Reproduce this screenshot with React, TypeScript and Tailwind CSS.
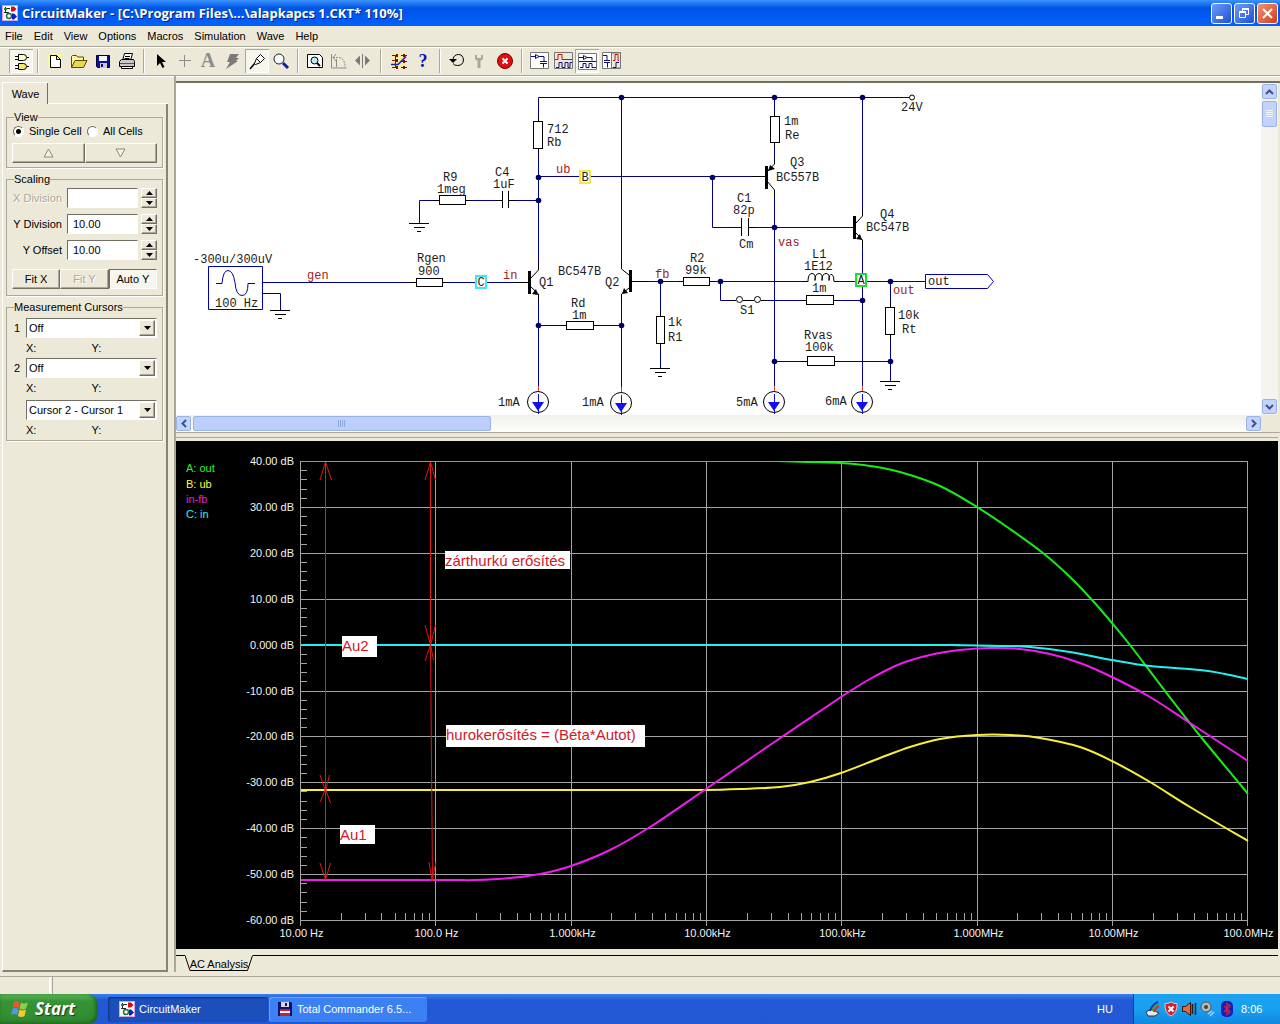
import React from 'react';

const SANS = 'font-["Liberation_Sans",Arial,sans-serif]';
const RAISED = 'border border-t-white border-l-white border-r-[#716f64] border-b-[#716f64] shadow-[inset_-1px_-1px_0_#aca899]';
const SUNKEN = 'border border-t-[#716f64] border-l-[#716f64] border-r-white border-b-white';

/* ---------- shared icons ---------- */

const AppIcon = () => (
  <svg width="16" height="16" viewBox="0 0 16 16" className="shrink-0">
    <rect x="0.5" y="0.5" width="15" height="15" fill="#fff" stroke="#e0a0e0" />
    <path d="M2 3.500h6M3.500 2v6M2 7.500h5M5.500 8v6" stroke="#222" fill="none" />
    <path d="M2 3h3v2H2z" fill="#1a8a2a" />
    <path d="M9 1.500h3l2.500 2.500L12 6.500H9z" fill="#d01010" />
    <circle cx="7" cy="11" r="2.500" fill="#fff" stroke="#137a3a" strokeWidth="1.500" />
    <path d="M10 8.500h2l3 3-3 3h-2z" fill="#1020c0" />
  </svg>
);

const icons: Record<string, React.ReactNode> = {
  gates: (
    <g stroke="#000" fill="#ffffc8">
      <path d="M9.500 5.500h5q3 0 3 3t-3 3h-5z" />
      <path d="M9.500 14.500h5q3 0 3 3t-3 3h-5z" fill="#f4e76a" />
      <path d="M6 7.500h3M6 10.500h3M18 8.500h2M6 16.500h3M6 19.500h3M18 17.500h2" />
    </g>
  ),
  fresh: (
    <g>
      <path d="M5 5h14v14H5z" fill="#ffff80" opacity="0.700" />
      <path d="M7.500 6.500h6l4 4v8h-10z" fill="#fff" stroke="#000" />
      <path d="M13.500 6.500v4h4" fill="none" stroke="#000" />
    </g>
  ),
  open: (
    <g stroke="#5a4a00" strokeLinejoin="round">
      <path d="M4.500 18.500v-11l1-1h4l1 1.500h6v3" fill="#fff8a0" />
      <path d="M4.500 18.500l3.500-7h12l-3.500 7z" fill="#e8d850" />
    </g>
  ),
  save: (
    <g>
      <path d="M5.500 6.500h13v12h-12l-1-1z" fill="#10108c" stroke="#000040" />
      <path d="M8 7h8v5H8z" fill="#f4f4ff" />
      <path d="M9 14h7v5H9z" fill="#c8c8d8" />
      <path d="M10 15h2v3h-2z" fill="#10108c" />
    </g>
  ),
  print: (
    <g stroke="#000" fill="#fff">
      <path d="M7.500 11.500l2-7h8l-2 7" />
      <path d="M10 7.500h5M9.500 9.500h5" />
      <path d="M4.500 12.500l2-2h12l1 2v5h-15z" fill="#c8c8c8" />
      <path d="M6.500 17.500h11v2h-11z" />
      <path d="M5 14.500h14" stroke="#555" />
    </g>
  ),
  pointer: <path d="M8 5v12l3-3 2.500 5 2-1-2.500-5h4z" fill="#000" />,
  plus: <path d="M6 11.500h12M11.500 6v12" stroke="#8c8c8c" />,
  letter: (
    <text x="11" y="18" textAnchor="middle" fontSize="20" fontWeight="bold" fill="#8c8c8c" fontFamily="Liberation Serif, serif">A</text>
  ),
  bolt: <path d="M9 5h9l-3 4h3l-3 3h2L5 20l4-7H6z" fill="#7a7a7a" />,
  probe: (
    <g stroke="#000" fill="#fff" strokeLinejoin="round">
      <path d="M5 20l5-6" strokeWidth="1.500" />
      <path d="M9.500 14.500l2-5 4-4 4 4-4 4-5 2z" />
      <path d="M11.500 9.500l4 4" />
    </g>
  ),
  lens: (
    <g>
      <path d="M14 14l5 5" stroke="#1020a0" strokeWidth="3" />
      <circle cx="10" cy="10" r="5" fill="#f6fbff" stroke="#222" />
    </g>
  ),
  fit: (
    <g stroke="#000" fill="#fff">
      <path d="M4.500 5.500h12l3 3v10h-15z" />
      <circle cx="11.500" cy="11.500" r="3.500" fill="#bfe8ee" />
      <path d="M14 14l3 3" strokeWidth="2" />
    </g>
  ),
  rotate: (
    <g stroke="#8c8c8c" fill="none">
      <path d="M4.500 5v14h15" />
      <path d="M6 8.500h5q7 0 7 10" strokeDasharray="2 1" />
      <path d="M9 5l-3 3.500 3 3.500M9.500 18v-8" />
    </g>
  ),
  mirror: (
    <g fill="#7a7a7a">
      <path d="M4 11.500l5-5v10zM19 11.500l-5-5v10z" />
      <path d="M11 5h1v14h-1z" />
    </g>
  ),
  wiring: (
    <g fill="none" stroke="#801010">
      <path d="M5 5h14v14H5z" fill="#fff27a" stroke="none" opacity="0.600" />
      <path d="M5 6.500h6M14 6.500h6M8.500 6v12M5 11.500h6M14 12.500h6M5 18.500h6M14 18.500h6" />
      <path d="M4 15.500h7l8-8" stroke="#1020c0" strokeWidth="1.500" />
      <path d="M9 5h2v3H9zM16 5h2v3h-2zM9 10h2v3H9zM16 11h2v3h-2zM9 17h2v3H9zM16 17h2v3h-2z" fill="#801010" stroke="none" />
    </g>
  ),
  help: (
    <text x="12" y="18" textAnchor="middle" fontSize="18" fontWeight="bold" fill="#1010b0" fontFamily="Liberation Serif, serif">?</text>
  ),
  reset: (
    <g fill="none" stroke="#000">
      <path d="M8 10q1-4.500 5.500-4.500t5 5.500q-.5 5.500-6 5.500-3.500 0-4.500-2" />
      <path d="M4 10h8l-4 4z" fill="#000" stroke="none" />
    </g>
  ),
  wrench: (
    <g fill="#a8a8a0">
      <path d="M6 6v4l2.500 2v7h3v-7l2.500-2V6h-2v3H8V6z" />
    </g>
  ),
  stop: (
    <g>
      <circle cx="12" cy="12" r="7.500" fill="#e01010" stroke="#700" />
      <path d="M9.500 9.500l5 5M14.500 9.500l-5 5" stroke="#fff" strokeWidth="2" />
    </g>
  ),
  viewA: (
    <g fill="none" stroke="#10106c">
      <path d="M3.500 3.500h18v16h-18z" fill="#fff" stroke="#777" />
      <path d="M4 7.500h4M12 7.500h5v5M13 12.500h7M13 14.500h7M16.500 14.500v4" />
      <path d="M8.500 5.500v4l3.500-2z" />
    </g>
  ),
  viewB: (
    <g fill="none">
      <path d="M3.500 3.500h18v16h-18z" fill="#ece9d8" stroke="#777" />
      <path d="M4 10.500h3v-5h4v5h10" stroke="#c01010" />
      <path d="M5 18.500h3v-5h3v5h3v-5h3v5h2v-5h2" stroke="#10108c" />
    </g>
  ),
  viewC: (
    <g fill="none" stroke="#10106c">
      <path d="M3.500 4.500h18v16h-18z" fill="#fff" stroke="#777" />
      <path d="M4 8.500h4M12 8.500h5v3M4 12.500h17" />
      <path d="M8.500 6.500v4l3.500-2z" />
      <path d="M5 18.500h3v-4h3v4h3v-4h3v4h4" />
    </g>
  ),
  viewD: (
    <g fill="none" stroke="#10106c">
      <path d="M3.500 3.500h18v16h-18z" fill="#fff" stroke="#777" />
      <path d="M12.500 4h9v15h-9z" fill="#ece9d8" stroke="#777" />
      <path d="M4 6.500h4v5M5 11.500h6M5 13.500h6M8.500 13.500v5" />
      <path d="M14 11.500h2v-6h3v6h1" stroke="#c01010" />
      <path d="M14 18.500h3v-5h3" />
    </g>
  ),
};

/* ---------- title, menu, toolbar ---------- */

const TitleBar = () => (
  <header className="flex h-[26px] shrink-0 items-center bg-linear-to-b from-[#3a93ff] via-[#0054e3] via-30% to-[#0062ff] pr-[2px] pl-[2px]">
    <AppIcon />
    <h1 className='ml-1 flex-1 truncate font-["Open_Sans",sans-serif] text-[13px] leading-5 font-bold text-white [text-shadow:1px_1px_0_#0a1f7a]'>
      CircuitMaker - [C:\Program Files\...\alapkapcs 1.CKT* 110%]
    </h1>
    <div className="flex gap-[2px]">
      <button aria-label="Minimize" className="h-[21px] w-[21px] rounded-[3px] border border-white bg-linear-to-br from-[#6f9bf5] to-[#1c4fd8]">
        <svg width="19" height="19" viewBox="0 0 19 19"><path d="M4 12h7v3H4z" fill="#fff" /></svg>
      </button>
      <button aria-label="Restore" className="h-[21px] w-[21px] rounded-[3px] border border-white bg-linear-to-br from-[#6f9bf5] to-[#1c4fd8]">
        <svg width="19" height="19" viewBox="0 0 19 19" fill="none" stroke="#fff">
          <path d="M4.500 8.500h6v5h-6zM7.500 8V5.500h6v5H11" />
          <path d="M4 8h7M7 5h7" strokeWidth="2" />
        </svg>
      </button>
      <button aria-label="Close" className="h-[21px] w-[21px] rounded-[3px] border border-white bg-linear-to-br from-[#f09070] to-[#d03a10]">
        <svg width="19" height="19" viewBox="0 0 19 19"><path d="M5 5l9 9M14 5l-9 9" stroke="#fff" strokeWidth="2" /></svg>
      </button>
    </div>
  </header>
);

const MenuBar = () => (
  <nav className={`flex h-5 shrink-0 items-center pl-[5px] text-[11px] leading-4 ${SANS}`}>
    {['File', 'Edit', 'View', 'Options', 'Macros', 'Simulation', 'Wave', 'Help'].map((m) => (
      <button key={m} className="mr-[11px]">{m}</button>
    ))}
  </nav>
);

const ToolGroup = ({ names, pressed }: { names: string[]; pressed?: string }) => (
  <div className="flex">
    {names.map((n) => (
      <button
        key={n}
        aria-label={n}
        className={n === pressed ? 'h-6 w-6 bg-[#f6f5ee] shadow-[inset_1px_1px_0_#aca899,inset_-1px_-1px_0_#fff]' : 'h-6 w-6'}
      >
        <svg width="24" height="24" viewBox="0 0 24 24">{icons[n]}</svg>
      </button>
    ))}
  </div>
);

const Divider = ({ wide }: { wide?: boolean }) => (
  <div className={`h-6 w-[2px] border-l border-[#aca899] bg-white ${wide ? 'mx-[5px]' : 'mx-1'}`} />
);

const Toolbar = () => (
  <div className="flex h-[30px] shrink-0 items-center border-t border-b border-[#aca899] pl-[9px] shadow-[inset_0_1px_0_#fff,0_1px_0_#fff]">
    <ToolGroup names={['gates']} pressed="gates" />
    <Divider />
    <ToolGroup names={['fresh', 'open', 'save', 'print']} />
    <Divider />
    <ToolGroup names={['pointer', 'plus', 'letter', 'bolt', 'probe', 'lens']} pressed="probe" />
    <Divider />
    <ToolGroup names={['fit', 'rotate', 'mirror']} />
    <Divider wide />
    <ToolGroup names={['wiring', 'help']} />
    <Divider />
    <ToolGroup names={['reset', 'wrench', 'stop']} />
    <Divider />
    <ToolGroup names={['viewA', 'viewB', 'viewC', 'viewD']} pressed="viewC" />
  </div>
);

/* ---------- left panel ---------- */

const Group = ({ title, className, children }: { title: string; className: string; children: React.ReactNode }) => (
  <fieldset className={`border border-[#aca899] px-[5px] shadow-[1px_1px_0_#fff] ${className}`}>
    <legend className="ml-[2px] leading-3">{title}</legend>
    {children}
  </fieldset>
);

const ScaleRow = ({ id, label, value, disabled }: { id: string; label: string; value: string; disabled?: boolean }) => (
  <div className="flex h-5 items-center">
    <label htmlFor={id} className={`w-[50px] text-right whitespace-nowrap ${disabled ? 'text-[#aca899] [text-shadow:1px_1px_0_#fff]' : ''}`}>{label}</label>
    <input id={id} defaultValue={value} disabled={disabled} className={`ml-[5px] h-5 w-[71px] bg-white pl-[5px] ${SUNKEN}`} />
    <div className="ml-auto flex h-5 w-4 flex-col">
      <button aria-label={`${label} up`} className={`flex h-[10px] items-center justify-center bg-[#ece9d8] ${RAISED}`}>
        <svg width="7" height="4" viewBox="0 0 7 4"><path d="M0 4h7L3.500 0z" /></svg>
      </button>
      <button aria-label={`${label} down`} className={`flex h-[10px] items-center justify-center bg-[#ece9d8] ${RAISED}`}>
        <svg width="7" height="4" viewBox="0 0 7 4"><path d="M0 0h7L3.500 4z" /></svg>
      </button>
    </div>
  </div>
);

const CursorSelect = ({ mark, name, value }: { mark: string; name: string; value: string }) => (
  <>
    <div className="flex h-5 items-center">
      <label htmlFor={name} className="w-[14px] pl-[2px]">{mark}</label>
      <div className="relative h-5 flex-1">
        <select id={name} aria-label={name} defaultValue={value} className={`h-5 w-full appearance-none bg-white pl-[2px] ${SUNKEN}`}>
          <option>{value}</option>
        </select>
        <span className={`pointer-events-none absolute top-[2px] right-[2px] flex h-4 w-4 items-center justify-center bg-[#ece9d8] ${RAISED}`}>
          <svg width="7" height="4" viewBox="0 0 7 4"><path d="M0 0h7L3.500 4z" /></svg>
        </span>
      </div>
    </div>
    <div className="grid h-5 grid-cols-2 items-center pl-[14px]">
      <span>X:</span>
      <span>Y:</span>
    </div>
  </>
);

const RADIO = 'h-[11px] w-[11px] appearance-none rounded-full border border-[#716f64] border-r-white border-b-white bg-white checked:bg-[radial-gradient(circle,#000_2px,#fff_3px)]';

const SidePanel = () => (
  <aside className={`flex w-[168px] shrink-0 flex-col pt-[6px] pl-[2px] text-[11px] leading-4 ${SANS}`}>
    <div className="z-10 flex h-[22px]">
      <button className="h-[22px] w-[46px] border-t border-l border-t-white border-l-white bg-[#ece9d8] shadow-[inset_-1px_0_0_#716f64]">Wave</button>
      <div className="flex-1 border-b border-white" />
    </div>
    <div className="flex flex-1 flex-col gap-[5px] border-r-2 border-b-2 border-l border-r-[#868378] border-b-[#868378] border-l-white px-[3px] pt-[7px]">
      <Group title="View" className="pb-1">
        <div className="flex h-4 items-center whitespace-nowrap">
          <input type="radio" id="single" name="view" defaultChecked className={`ml-[1px] ${RADIO}`} />
          <label htmlFor="single" className="ml-[5px] w-[58px]">Single Cell</label>
          <input type="radio" id="all" name="view" className={RADIO} />
          <label htmlFor="all" className="ml-[5px]">All Cells</label>
        </div>
        <div className="mt-1 grid grid-cols-2">
          <button aria-label="Previous cell" className={`flex h-5 items-center justify-center ${RAISED}`}>
            <svg width="11" height="10" viewBox="0 0 11 10"><path d="M1 9h9L5.500 1z" fill="#f4f2e6" stroke="#8c897c" /></svg>
          </button>
          <button aria-label="Next cell" className={`flex h-5 items-center justify-center ${RAISED}`}>
            <svg width="11" height="10" viewBox="0 0 11 10"><path d="M1 1h9L5.500 9z" fill="#f4f2e6" stroke="#8c897c" /></svg>
          </button>
        </div>
      </Group>

      <Group title="Scaling" className="pb-[6px]">
        <div className="flex flex-col gap-[6px] pt-[3px]">
          <ScaleRow id="xdiv" label="X Division" value="" disabled />
          <ScaleRow id="ydiv" label="Y Division" value="10.00" />
          <ScaleRow id="yoff" label="Y Offset" value="10.00" />
        </div>
        <div className="mt-[9px] grid grid-cols-3">
          <button className={`h-5 ${RAISED}`}>Fit X</button>
          <button disabled className={`h-5 text-[#aca899] [text-shadow:1px_1px_0_#fff] ${RAISED}`}>Fit Y</button>
          <button className={`h-5 bg-[#f6f5ee] ${SUNKEN}`}>Auto Y</button>
        </div>
      </Group>

      <Group title="Measurement Cursors" className="pt-[5px]">
        <CursorSelect mark="1" name="Cursor 1" value="Off" />
        <CursorSelect mark="2" name="Cursor 2" value="Off" />
        <div className="h-[2px]" />
        <CursorSelect mark="" name="Cursor difference" value="Cursor 2 - Cursor 1" />
      </Group>
    </div>
  </aside>
);

/* ---------- schematic ---------- */

const wires = [
  'M538.500 121V97.500H909', 'M538.500 149V263', 'M419.500 223V200.500H439', 'M466 200.500H502', 'M509 200.500H538',
  'M263 282.500H416', 'M443 282.500H514', 'M263 293.500H280.500V310', 'M538.500 301V391', 'M538.500 325.500H566', 'M594 325.500H621',
  'M621.500 97V266', 'M621.500 301V391', 'M538 176.500H752', 'M712.500 177V227.500H741', 'M749 227.500H853', 'M774.500 97V116',
  'M774.500 143V158', 'M774.500 196V391', 'M862.500 97V210', 'M862.500 246V391', 'M646 281.500H683', 'M710 281.500H808',
  'M834 281.500H925', 'M720.500 281V300.500H736', 'M761 300.500H807', 'M834 300.500H862', 'M660.500 281V316', 'M660.500 344V368',
  'M890.500 281V307', 'M890.500 335V381', 'M774 361.500H807', 'M835 361.500H890',
];

// short black component leads that sit on top of the wires
const leads = [
  'M433 200.500h6M466 200.500h5M496 200.500h6M509 200.500h6', 'M410 282.500h6M443 282.500h5', 'M538.500 116v5M538.500 149v5',
  'M514 282.500h15', 'M632 281.500h15', 'M752 176.500h14', 'M561 325.500h5M594 325.500h5', 'M774.500 111v5M774.500 143v5',
  'M660.500 311v5M660.500 344v5', 'M678 281.500h5M710 281.500h5', 'M735 227.500h6M749 227.500h6', 'M801 300.500h6M834 300.500h6',
  'M801 361.500h6M835 361.500h6', 'M890.500 302v5M890.500 335v5', 'M730 300.500h6M743 300.500h11M761 300.500h6', 'M803 281.500h5M834 281.500h5',
  // capacitor plates
  'M502.500 191v17M508.500 191v17M741.500 218v18M748.500 218v18',
  // transistors
  'M531 278l7.500-8v-8M531 287l7.500 7v8', 'M629 275l-7.500-6v-7M629 288l-7.500 6v8',
  'M767 172l7.500-8v-7M767 181l7.500 9v7', 'M856 223l6.500-7v-7M856 233l6.500 7v7',
  // coil
  'M808 281.500q0-8 4-8q4 0 3 7q0-7 4-7t3 7q0-7 4-7q4 0 3 7q0-7 3-6q2 1 2 7',
];

const resistors = [
  [533, 121, 9, 27], [439, 195, 26, 9], [416, 278, 26, 8], [770, 116, 9, 26], [683, 277, 26, 8], [656, 316, 8, 27],
  [566, 321, 27, 8], [806, 295, 27, 9], [885, 307, 9, 27], [807, 356, 27, 9],
];

const nodes = [
  [538, 177], [538, 200], [538, 325], [621, 97], [621, 325], [712, 177], [774, 97], [774, 227], [774, 361],
  [862, 97], [660, 281], [720, 281], [890, 281], [862, 300], [890, 361],
];

const parts: [number, number, string][] = [
  [547, 133, '712'], [547, 146, 'Rb'], [443, 181, 'R9'], [437, 193, '1meg'], [495, 176, 'C4'], [493, 188, '1uF'],
  [193, 263, '-300u/300uV'], [215, 307, '100 Hz'], [417, 262, 'Rgen'], [418, 275, '900'], [539, 286, 'Q1'],
  [498, 406, '1mA'], [558, 275, 'BC547B'], [605, 286, 'Q2'], [571, 307, 'Rd'], [572, 319, '1m'], [668, 326, '1k'],
  [668, 341, 'R1'], [690, 262, 'R2'], [685, 274, '99k'], [737, 202, 'C1'], [733, 214, '82p'], [739, 248, 'Cm'],
  [740, 314, 'S1'], [582, 406, '1mA'], [736, 406, '5mA'], [901, 111, '24V'], [784, 125, '1m'], [785, 139, 'Re'],
  [790, 166, 'Q3'], [776, 181, 'BC557B'], [880, 218, 'Q4'], [866, 231, 'BC547B'], [812, 258, 'L1'], [804, 270, '1E12'],
  [812, 292, '1m'], [928, 285, 'out'], [898, 319, '10k'], [902, 333, 'Rt'], [804, 339, 'Rvas'], [805, 351, '100k'],
  [825, 405, '6mA'],
];

const nets: [number, number, string][] = [
  [307, 279, 'gen'], [503, 279, 'in'], [556, 173, 'ub'], [655, 278, 'fb'], [778, 246, 'vas'], [893, 294, 'out'],
];

const probes: [number, number, string, string][] = [
  [476, 276, 'C', '#40e8e8'], [580, 171, 'B', '#f0e850'], [856, 274, 'A', '#18e030'],
];

const Schematic = () => (
  <svg width="1085" height="332" viewBox="176 83 1085 332" className="shrink-0">
    <g fill="none" stroke="#00008c">{wires.map((d) => <path key={d} d={d} />)}</g>
    <g fill="none" stroke="#000">
      {leads.map((d) => <path key={d} d={d} />)}
      {[[419, 223], [280, 310], [660, 368], [890, 381]].map(([x, y]) => (
        <path key={`${x}`} d={`M${x - 10} ${y + 0.5}h20M${x - 5} ${y + 4.5}h11M${x - 2} ${y + 8.5}h4`} />
      ))}
    </g>
    <g fill="#fff" stroke="#000">
      {resistors.map(([x, y, w, h]) => <rect key={`${x}-${y}`} x={x + 0.5} y={y + 0.5} width={w} height={h} />)}
      <circle cx="912" cy="97.500" r="2.500" />
      <circle cx="739.500" cy="299.500" r="3" />
      <circle cx="757.500" cy="299.500" r="3" />
    </g>
    <g fill="#000">
      <path d="M528 271h3v23h-3zM629 270h3v22h-3zM765 166h3v23h-3zM853 216h3v23h-3z" />
      <path d="M538 295l-6-1 4-5zM622 294l6-1-4-5zM768 171l2-6 5 4zM862 240l-6-1 4-5z" />
    </g>
    {[[538, 402], [621, 403], [774, 402], [862, 402]].map(([x, y]) => (
      <g key={x}>
        <path d={`M${x + 0.5} ${y - 16}v5`} stroke="#d04040" />
        <circle cx={x} cy={y} r="10.500" fill="#fff" stroke="#000" />
        <path d={`M${x + 0.5} ${y - 8}v20`} stroke="#1010d0" />
        <path d={`M${x - 6} ${y}h12l-6 9z`} fill="#1010f0" />
      </g>
    ))}
    <g fill="none" stroke="#0000a8">
      <path d="M208.500 266.500h54v43h-54z" />
      <path d="M216 283.500h6q1-13 6-13t7 12q1 13 7 13t6-12h7" />
      <path d="M925.500 274.500h62l6 7-6 7h-62z" fill="#fff" />
    </g>
    <g fill="#000060">{nodes.map(([x, y]) => <circle key={`${x}-${y}`} cx={x + 0.5} cy={y + 0.5} r="2.800" />)}</g>
    <g fontFamily="Liberation Mono, monospace" fontSize="12" fill="#1c1c1c">
      {parts.map(([x, y, t]) => <text key={`${x}-${y}`} x={x} y={y}>{t}</text>)}
      <g fill="#a01c24">{nets.map(([x, y, t]) => <text key={`${x}-${y}`} x={x} y={y}>{t}</text>)}</g>
      {probes.map(([x, y, t, color]) => (
        <g key={t}>
          <rect x={x} y={y} width="10" height="12" fill="#fff" stroke={color} strokeWidth="2" />
          <text x={x + 5} y={y + 10} textAnchor="middle">{t}</text>
        </g>
      ))}
    </g>
  </svg>
);

const SCROLL_BUTTON = 'flex h-[15px] w-[15px] shrink-0 items-center justify-center rounded-[2px] border border-[#9ab4ea] bg-[#c3d3fd]';

const SchematicPane = () => (
  <section className="shrink-0 border-t-2 border-b border-t-[#716f64] border-b-[#aca899]">
    <div className="flex h-[332px]">
      <div className="flex-1 overflow-hidden bg-white"><Schematic /></div>
      <div className="mr-[2px] flex w-[17px] flex-col items-center bg-[#f5f4ee] py-px">
        <button aria-label="Scroll up" className={SCROLL_BUTTON}>
          <svg width="9" height="6" viewBox="0 0 9 6"><path d="M1 5l3.500-3.500L8 5" fill="none" stroke="#3c5684" strokeWidth="2" /></svg>
        </button>
        <div className="mt-[2px] flex h-[26px] w-[15px] items-center justify-center rounded-[2px] border border-[#9ab4ea] bg-[#c3d3fd]">
          <svg width="7" height="8" viewBox="0 0 7 8"><path d="M0 .5h7M0 2.500h7M0 4.500h7M0 6.500h7" stroke="#eef4fe" /></svg>
        </div>
        <button aria-label="Scroll down" className={`mt-auto ${SCROLL_BUTTON}`}>
          <svg width="9" height="6" viewBox="0 0 9 6"><path d="M1 1l3.500 3.500L8 1" fill="none" stroke="#3c5684" strokeWidth="2" /></svg>
        </button>
      </div>
    </div>
    <div className="flex h-[17px]">
      <div className="flex flex-1 items-center bg-linear-to-b from-[#f1f0ea] to-[#fefefb]">
        <button aria-label="Scroll left" className={SCROLL_BUTTON}>
          <svg width="6" height="9" viewBox="0 0 6 9"><path d="M5 1L1.500 4.500 5 8" fill="none" stroke="#3c5684" strokeWidth="2" /></svg>
        </button>
        <div className="ml-[2px] flex h-[15px] w-[298px] items-center justify-center rounded-[2px] border border-[#9ab4ea] bg-[#bccffb]">
          <svg width="8" height="7" viewBox="0 0 8 7"><path d="M.5 0v7M2.500 0v7M4.500 0v7M6.500 0v7" stroke="#8fa8dc" /></svg>
        </div>
        <button aria-label="Scroll right" className={`ml-auto ${SCROLL_BUTTON}`}>
          <svg width="6" height="9" viewBox="0 0 6 9"><path d="M1 1l3.500 3.500L1 8" fill="none" stroke="#3c5684" strokeWidth="2" /></svg>
        </button>
      </div>
      <div className="w-[19px]" />
    </div>
  </section>
);

/* ---------- AC analysis plot ---------- */

type Pt = [number, number];

// Catmull-Rom spline through the sampled points
const smooth = (p: Pt[]) =>
  p.slice(1).reduce((d, cur, i) => {
    const prev = p[i];
    const before = p[i - 1] ?? prev;
    const after = p[i + 2] ?? cur;
    return `${d}C${prev[0] + (cur[0] - before[0]) / 6} ${prev[1] + (cur[1] - before[1]) / 6} ${cur[0] - (after[0] - prev[0]) / 6} ${cur[1] - (after[1] - prev[1]) / 6} ${cur[0]} ${cur[1]}`;
  }, `M${p[0][0]} ${p[0][1]}`);

const curves: { color: string; points: Pt[] }[] = [
  { color: '#18ec18', points: [[301, 461], [740, 461], [775, 461], [810, 462], [841, 463], [870, 466], [900, 472], [940, 486], [977, 507], [1010, 529], [1043, 553], [1070, 577], [1093, 601], [1112, 623], [1130, 645], [1165, 691], [1201, 737], [1239, 783], [1248, 794]] },
  { color: '#f6f03c', points: [[301, 790], [620, 790], [660, 790], [706, 790], [740, 789], [780, 787], [810, 782], [841, 773], [880, 758], [910, 747], [940, 739], [977, 735], [1010, 735], [1040, 738], [1080, 747], [1112, 761], [1150, 782], [1190, 807], [1248, 841]] },
  { color: '#24f0f0', points: [[301, 645], [900, 645], [950, 645], [1000, 646], [1030, 647], [1070, 652], [1112, 660], [1150, 666], [1200, 670], [1225, 674], [1248, 679]] },
  { color: '#f01cf0', points: [[301, 880], [440, 880], [475, 880], [510, 878], [540, 874], [571, 866], [610, 850], [650, 827], [706, 789], [770, 745], [841, 697], [870, 679], [900, 664], [930, 655], [960, 650], [990, 648], [1020, 649], [1050, 654], [1080, 663], [1112, 677], [1150, 697], [1190, 723], [1248, 761]] },
];

const GX = 300.5;
const DECADE = 135.35;
const GY = 461.5;
const TEN_DB = 45.9;

const yLabels = ['40.00 dB', '30.00 dB', '20.00 dB', '10.00 dB', '0.000 dB', '-10.00 dB', '-20.00 dB', '-30.00 dB', '-40.00 dB', '-50.00 dB', '-60.00 dB'];
const xLabels = ['10.00 Hz', '100.0 Hz', '1.000kHz', '10.00kHz', '100.0kHz', '1.000MHz', '10.00MHz', '100.0MHz'];

const crisp = (n: number) => Math.floor(n) + 0.5;
const gx = (i: number) => crisp(GX + i * DECADE);
const gy = (i: number) => crisp(GY + i * TEN_DB);

const notes: { x: number; y: number; w: number; h: number; text: string }[] = [
  { x: 445, y: 551, w: 125, h: 18, text: 'zárthurkú erősítés' },
  { x: 342, y: 636, w: 35, h: 21, text: 'Au2' },
  { x: 446, y: 725, w: 199, h: 22, text: 'hurokerősítés = (Béta*Autot)' },
  { x: 340, y: 825, w: 35, h: 19, text: 'Au1' },
];

const Plot = () => (
  <svg viewBox="176 441 1102 508" className="min-h-0 w-full flex-1 bg-black">
    <clipPath id="grid-area">
      <rect x="300" y="461" width="949" height="460" />
    </clipPath>
    <g stroke="#a4a4a4" fill="none">
      {xLabels.map((l, i) => <path key={l} d={`M${gx(i)} 461V926`} />)}
      {yLabels.map((l, i) => <path key={l} d={`M300 ${gy(i)}H1248`} />)}
      {Array.from({ length: 50 }, (_, i) => <path key={i} d={`M301 ${crisp(GY + (i * TEN_DB) / 5)}h6`} />)}
      {xLabels.slice(1).map((l, i) =>
        [2, 3, 4, 5, 6, 7, 8, 9].map((n) => <path key={l + n} d={`M${crisp(GX + (i + Math.log10(n)) * DECADE)} 913v7`} />)
      )}
    </g>
    <g fill="none" strokeWidth="2" clipPath="url(#grid-area)">
      {curves.map((c) => <path key={c.color} d={smooth(c.points)} stroke={c.color} />)}
    </g>
    <g fill="none" stroke="#e01818">
      <path d="M325.500 462V880M430.500 462V645M430.500 645L432.500 881" />
      <path d="M320 480l5.500-18 6 18M320 775l5.500 16 4-16M320 802l5.500-13 5 14M320 863l5.500 17 5-17" />
      <path d="M425 480l5.500-18 5 18M425 625l5.500 20 5-20M425 661l5.500-16 3 15M429 862l3 19 4-19" />
    </g>
    <g fontFamily="Liberation Sans, Arial, sans-serif" fontSize="11">
      <g fill="#f4f4f4" textAnchor="end">
        {yLabels.map((l, i) => <text key={l} x="294" y={gy(i) + 3.5}>{l}</text>)}
      </g>
      <g fill="#f4f4f4" textAnchor="middle">
        {xLabels.map((l, i) => <text key={l} x={gx(i) + 1} y="937">{l}</text>)}
      </g>
      <text x="186" y="472" fill="#30f030">A: out</text>
      <text x="186" y="488" fill="#f8f840">B: ub</text>
      <text x="186" y="503" fill="#e020e0">in-fb</text>
      <text x="186" y="518" fill="#30f0f0">C: in</text>
    </g>
    <g fontFamily="Liberation Sans, Arial, sans-serif" fontSize="15">
      {notes.map((n) => (
        <g key={n.text}>
          <rect x={n.x} y={n.y} width={n.w} height={n.h} fill="#fff" />
          <text x={n.x} y={n.y + 15} fill="#d01828">{n.text}</text>
        </g>
      ))}
    </g>
  </svg>
);

const AnalysisTabs = () => (
  <div className={`flex h-[23px] shrink-0 pt-[6px] text-[11px] leading-4 ${SANS}`}>
    <div className="w-[9px] border-t border-black" />
    <button className="relative h-[17px] w-[68px]">
      <svg width="68" height="17" viewBox="0 0 68 17" className="absolute inset-0" fill="none" stroke="#000">
        <path d="M0 .5L5 15.500h57.500L67.500.5" />
      </svg>
      <span className="relative whitespace-nowrap">AC Analysis</span>
    </button>
    <div className="flex-1 border-t border-black" />
  </div>
);

/* ---------- taskbar ---------- */

const Taskbar = () => (
  <footer className={`flex h-[30px] shrink-0 items-stretch bg-linear-to-b from-[#3a80f0] via-[#2359d6] via-20% to-[#2258d4] text-[11px] text-white ${SANS}`}>
    <button className='flex w-[98px] items-center rounded-r-[10px] bg-linear-to-b from-[#5cb85c] via-[#359435] via-25% to-[#2f8a2f] pl-[10px] font-["Open_Sans",sans-serif] text-[17px] font-bold italic shadow-[inset_-2px_-1px_4px_#1c5c1c] [text-shadow:1px_1px_1px_#1a3a1a]'>
      <svg width="20" height="20" viewBox="0 0 20 20" className="mr-[5px]">
        <path d="M4 3q3-2 6 0L8.500 9q-3-2-6 0z" fill="#e8582a" />
        <path d="M11 3.500q3 2 7 0L16 9.500q-3 2-6.500 0z" fill="#8cd04a" />
        <path d="M2.500 10q3-2 6 0L7 16q-3-2-6 0z" fill="#5a90f0" />
        <path d="M9.500 10.500q3 2 6.500 0L14.500 17q-3 2-6.500 0z" fill="#f8c830" />
      </svg>
      Start
    </button>
    <div className="flex flex-1 items-center pl-[10px]">
      <button className="flex h-[25px] w-40 items-center rounded-[3px] bg-[#1c4fba] pl-[11px] shadow-[inset_1px_1px_2px_#0f3080]">
        <AppIcon />
        <span className="ml-1">CircuitMaker</span>
      </button>
      <button className="ml-px flex h-[25px] w-[158px] items-center rounded-[3px] bg-[#3c81f3] pl-2 shadow-[inset_1px_1px_1px_#6aa4ff]">
        <svg width="16" height="16" viewBox="0 0 16 16">
          <path d="M1 1h13l1 1v13H1z" fill="#101070" />
          <path d="M4 1h8v5H4z" fill="#d8d8e8" />
          <path d="M8 2h2v3H8z" fill="#101070" />
          <path d="M3 8h10v7H3z" fill="#fff" />
          <path d="M3 8h10v2H3zM3 12h10v3H3z" fill="#c82030" />
        </svg>
        <span className="ml-1">Total Commander 6.5...</span>
      </button>
    </div>
    <span className="flex w-9 items-center">HU</span>
    <div className="flex w-[147px] items-center gap-[2px] border-l border-[#0c3c9c] bg-linear-to-b from-[#1ea0f0] via-[#18a0f0] to-[#1088e0] pl-[11px]">
      <svg width="16" height="16" viewBox="0 0 16 16">
        <path d="M1 11l5-3 8 4-4 3H3z" fill="#e8e8e8" stroke="#333" />
        <path d="M5 10q2-6 8-9" stroke="#1030c0" strokeWidth="2" fill="none" />
        <path d="M7 10q2-5 6-7" stroke="#20b040" strokeWidth="2" fill="none" />
        <path d="M9 11q1-4 5-6" stroke="#e03020" strokeWidth="2" fill="none" />
      </svg>
      <svg width="16" height="16" viewBox="0 0 16 16">
        <path d="M8 1q3 2 6 1.500Q14.500 12 8 15 1.500 12 2 2.500 5 3 8 1z" fill="#d02030" stroke="#f0c0c0" />
        <path d="M5.500 5.500l5 5M10.500 5.500l-5 5" stroke="#fff" strokeWidth="2" />
      </svg>
      <svg width="16" height="16" viewBox="0 0 16 16">
        <path d="M1.500 5.500h3l5-4v13l-5-4h-3z" fill="#e86a3a" stroke="#401000" />
        <path d="M11.500 3v10M14.500 2v12" stroke="#222" strokeWidth="1.500" />
      </svg>
      <svg width="16" height="16" viewBox="0 0 16 16">
        <circle cx="7" cy="6" r="5" fill="#b8b8b8" stroke="#555" />
        <circle cx="7" cy="6" r="2" fill="#444" />
        <path d="M9 13l4-3M11 15l4-4" stroke="#a8d4f8" strokeWidth="1.500" />
      </svg>
      <svg width="16" height="16" viewBox="0 0 16 16" className="ml-[2px]">
        <rect x="2" y="0" width="12" height="16" rx="5" fill="#1020c0" />
        <path d="M5 5l6 6-3 2.500v-11L11 5l-6 6" fill="none" stroke="#d02040" strokeWidth="1.500" />
      </svg>
      <span className="ml-1">8:06</span>
    </div>
  </footer>
);

export default function App() {
  return (
    <div className="flex h-screen min-h-[700px] flex-col overflow-hidden bg-[#ece9d8] text-black">
      <TitleBar />
      <MenuBar />
      <Toolbar />
      <main className="flex min-h-0 flex-1 gap-[6px] pb-1">
        <SidePanel />
        <div className="flex min-w-0 flex-1 flex-col border-l-2 border-[#aca899] pt-[5px]">
          <SchematicPane />
          <div className="mt-1 mr-[2px] flex min-h-0 flex-1 flex-col border-t border-[#aca899] pt-[3px]">
            <Plot />
            <AnalysisTabs />
          </div>
        </div>
      </main>
      <div className="flex h-[18px] shrink-0 border-t border-[#aca899]">
        <div className="w-[51px] border-r-2 border-white" />
        <div className="ml-[1px] flex-1 border-l border-[#aca899]" />
      </div>
      <Taskbar />
    </div>
  );
}
